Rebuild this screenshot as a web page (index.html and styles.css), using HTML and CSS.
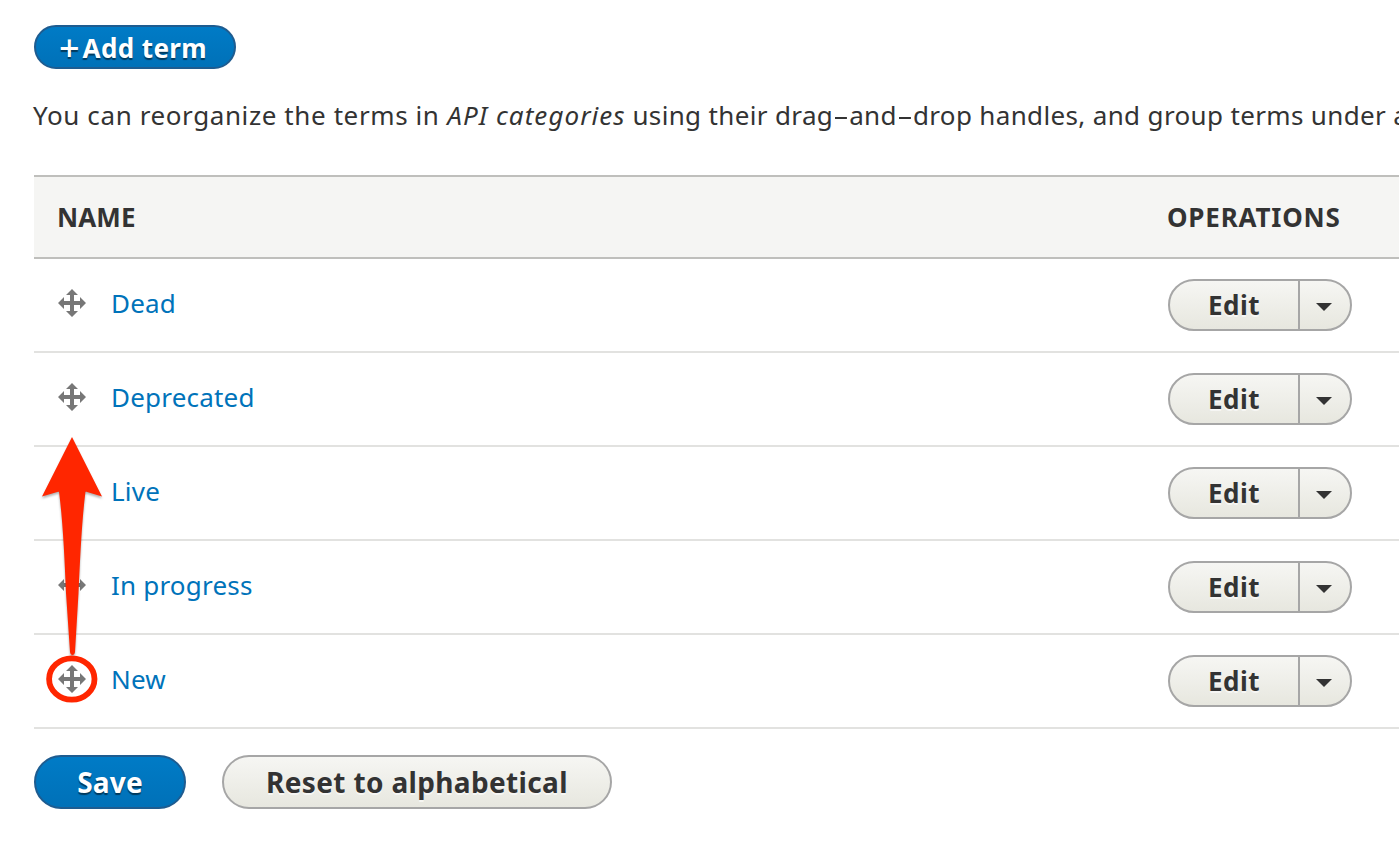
FILE: index.html
```html
<!DOCTYPE html>
<html lang="en">
<head>
<meta charset="utf-8">
<title>API categories</title>
<link rel="stylesheet" href="styles.css">
</head>
<body>
<svg class="sprite" aria-hidden="true">
  <symbol id="move" viewBox="0 0 28 28">
    <path d="M14 0l6 6h-4v6h6V8l6 6-6 6v-4h-6v6h4l-6 6-6-6h4v-6H6v4l-6-6 6-6v4h6V6H8z"/>
  </symbol>
</svg>
<main class="page">
  <a class="button primary add"><span class="plus">+</span><span class="add-label">Add term</span></a>
  <p class="help"><span class="help-a">You can reorganize the terms in</span> <em>API categories</em> <span class="help-b">using their drag<span class="hyphen">-</span>and<span class="hyphen">-</span>drop handles, and group terms under a</span></p>
  <div class="table">
    <div class="row head"><span class="name-head">Name</span><span class="ops-head">Operations</span></div>
    <div class="row"><svg class="handle"><use href="#move"/></svg><a class="term">Dead</a><div class="dropbutton"><span class="edit">Edit</span><span class="toggle"><i class="caret"></i></span></div></div>
    <div class="row"><svg class="handle"><use href="#move"/></svg><a class="term">Deprecated</a><div class="dropbutton"><span class="edit">Edit</span><span class="toggle"><i class="caret"></i></span></div></div>
    <div class="row"><svg class="handle"><use href="#move"/></svg><a class="term">Live</a><div class="dropbutton"><span class="edit">Edit</span><span class="toggle"><i class="caret"></i></span></div></div>
    <div class="row"><svg class="handle"><use href="#move"/></svg><a class="term">In progress</a><div class="dropbutton"><span class="edit">Edit</span><span class="toggle"><i class="caret"></i></span></div></div>
    <div class="row"><svg class="handle"><use href="#move"/></svg><a class="term">New</a><div class="dropbutton"><span class="edit">Edit</span><span class="toggle"><i class="caret"></i></span></div></div>
    <svg class="annotation" viewBox="0 0 70 275">
      <path class="arrow" d="M36 4L66 63.500L49.500 58.500C45.500 90 44 130 42.500 160L39 219Q38.500 222 36.500 222Q34.500 222 34 219L30 160C28.500 125 27 90 23 58.500L6 63.500z"/>
      <ellipse class="ring" cx="35.800" cy="246" rx="22.700" ry="20.700"/>
    </svg>
  </div>
  <div class="actions">
    <a class="button primary save">Save</a>
    <a class="button reset">Reset to alphabetical</a>
  </div>
</main>
</body>
</html>
```

FILE: styles.css
```css
* { box-sizing: border-box; }
body {
  margin: 0;
  background: #fff;
  color: #333;
  font: 26px/36px "Noto Sans", "Open Sans", sans-serif;
  overflow: hidden;
}
.sprite { display: none; }
.page { padding: 25px 0 0 34px; height: 845px; overflow: hidden; }
.button {
  display: flex;
  align-items: center;
  justify-content: center;
  height: 54px;
  border: 2px solid #a6a6a6;
  border-radius: 27px;
  background: linear-gradient(#f6f6f3, #e7e7df);
  font-weight: 700;
  white-space: nowrap;
  text-shadow: 0 2px 0 rgba(255, 255, 255, .6);
}
.primary {
  color: #fff;
  border-color: #1e5c90;
  background: linear-gradient(#007bc6, #0071b8);
  text-shadow: 0 2px 1px rgba(0, 0, 0, .5);
}
.add { width: 202px; height: 44px; gap: 3px; padding: 1px 4px 0 0; letter-spacing: .4px; }
.plus { font-size: 36px; font-weight: 500; letter-spacing: 0; }
.help { margin: 28px 0 0 -1px; height: 36px; white-space: nowrap; }
.help-a { letter-spacing: .6px; }
.help em { letter-spacing: 1.05px; margin-left: 1px; }
.help-b { letter-spacing: .35px; }
.hyphen { display: inline-block; width: 16px; text-align: center; transform: scaleX(1.9); letter-spacing: 0; }
.table { position: relative; margin-top: 42px; }
.row {
  display: flex;
  align-items: center;
  height: 94px;
  padding-left: 24px;
  border-bottom: 2px solid #e2e2e0;
}
.head {
  height: 84px;
  padding-left: 23px;
  border-top: 2px solid #bfbfbc;
  border-bottom-color: #bfbfbc;
  background: #f5f5f3;
  font-weight: 700;
  text-transform: uppercase;
}
.name-head { width: 1110px; letter-spacing: .1px; }
.ops-head { letter-spacing: .8px; }
.handle { width: 28px; height: 28px; fill: #777; margin: -4px 25px 0 0; }
.term { width: 1057px; color: #0073ba; margin-top: -4px; letter-spacing: .2px; }
.dropbutton {
  display: flex;
  width: 184px;
  height: 52px;
  border: 2px solid #a6a6a6;
  border-radius: 26px;
  background: linear-gradient(#f6f6f3, #e7e7df);
  font-weight: 700;
  text-shadow: 0 2px 0 rgba(255, 255, 255, .6);
}
.edit { width: 130px; padding-left: 38px; line-height: 49px; letter-spacing: .5px; border-right: 2px solid #a6a6a6; }
.toggle { display: flex; align-items: center; padding: 4px 0 0 16px; }
.caret { border: 8px solid transparent; border-top-color: #333; border-bottom: 0; }
.annotation { position: absolute; left: 2px; top: 258px; width: 70px; height: 275px; }
.arrow { fill: #ff2600; filter: drop-shadow(0 2px 1px rgba(0, 0, 0, .3)); }
.ring { fill: none; stroke: #ff2600; stroke-width: 5.800px; }
.actions { display: flex; gap: 36px; margin-top: 26px; font-size: 28px; }
.save { width: 152px; letter-spacing: .2px; }
.reset { width: 390px; letter-spacing: .35px; }
```
